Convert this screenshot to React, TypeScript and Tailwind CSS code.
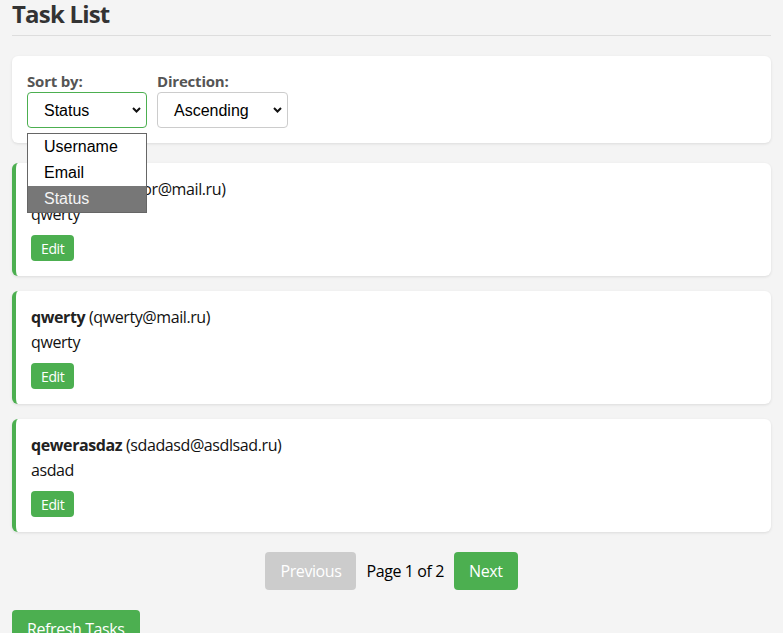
import { useState } from "react";

interface Task {
  id: number;
  username: string;
  email: string;
  text: string;
}

const tasks: Task[] = [
  { id: 1, username: "qwerty", email: "qwertyor@mail.ru", text: "qwerty" },
  { id: 2, username: "qwerty", email: "qwerty@mail.ru", text: "qwerty" },
  { id: 3, username: "qewerasdaz", email: "sdadasd@asdlsad.ru", text: "asdad" },
];

const sortOptions = ["Username", "Email", "Status"];

function Chevron() {
  return (
    <svg
      width="9"
      height="6"
      viewBox="0 0 9 6"
      className="pointer-events-none absolute right-[6px] top-1/2 -translate-y-1/2"
    >
      <path d="M1 1l3.5 3.5L8 1" fill="none" stroke="#111" strokeWidth="2" />
    </svg>
  );
}

export default function App() {
  const [sortBy] = useState("Status");

  return (
    <div className="min-h-screen bg-[#f4f4f4] px-[12px] font-['Open_Sans',sans-serif] tracking-[-0.4px] text-[#111]">
      <h1 className="h-[36px] border-b border-[#dddddd] pb-[7px] text-[24px] font-bold leading-[28px] tracking-[-0.8px] text-[#333]">
        Task List
      </h1>

      <div className="relative mt-[20px] rounded-[6px] bg-white p-[15px] shadow-[0_1px_3px_rgba(0,0,0,0.1)]">
        <div className="flex gap-[10px]">
          <div>
            <label className="block text-[15px] font-bold leading-[21px] tracking-[-0.2px] text-[#555]">
              Sort by:
            </label>
            <div className="relative">
              <div className="flex h-[36px] w-[120px] items-center rounded-[4px] border border-[#4caf50] bg-white pl-[16px] pt-[2px] font-['Liberation_Sans',sans-serif] text-[16px] tracking-normal text-black">
                {sortBy}
              </div>
              <Chevron />
              <ul className="absolute left-0 top-[41px] z-10 w-[120px] border border-[#666] bg-white font-['Liberation_Sans',sans-serif] text-[16px] tracking-normal text-black">
                {sortOptions.map((o) => (
                  <li
                    key={o}
                    className={`h-[26px] pl-[16px] leading-[26px] ${
                      o === sortBy ? "bg-[#777777] text-[#f4f4f4]" : ""
                    }`}
                  >
                    {o}
                  </li>
                ))}
              </ul>
            </div>
          </div>
          <div>
            <label className="block text-[15px] font-bold leading-[21px] tracking-[-0.2px] text-[#555]">
              Direction:
            </label>
            <div className="relative">
              <div className="flex h-[36px] w-[131px] items-center rounded-[4px] border border-[#cccccc] bg-white pl-[16px] pt-[2px] font-['Liberation_Sans',sans-serif] text-[16px] tracking-normal text-black">
                Ascending
              </div>
              <Chevron />
            </div>
          </div>
        </div>
      </div>

      <div className="mt-[20px] flex flex-col gap-[15px]">
        {tasks.map((t) => (
          <div
            key={t.id}
            className="rounded-[6px] border-l-4 border-[#4caf50] bg-white p-[15px] shadow-[0_1px_3px_rgba(0,0,0,0.1)]"
          >
            <p className="pt-[1px] text-[16px] leading-[21px]">
              <strong className="font-bold text-[#222]">{t.username}</strong> ({t.email})
            </p>
            <p className="mt-[4px] text-[16px] leading-[21px]">{t.text}</p>
            <button className="mt-[10px] h-[26px] rounded-[4px] bg-[#4caf50] px-[10px] text-[14px] text-white">
              Edit
            </button>
          </div>
        ))}
      </div>

      <div className="mt-[20px] flex items-center justify-center gap-[10px]">
        <button
          disabled
          className="h-[38px] rounded-[4px] bg-[#cccccc] px-[15px] text-[16px] text-white"
        >
          Previous
        </button>
        <span className="text-[16px] text-black">Page 1 of 2</span>
        <button className="h-[38px] rounded-[4px] bg-[#4caf50] px-[15px] text-[16px] text-white">
          Next
        </button>
      </div>

      <button className="mt-[20px] h-[38px] rounded-[4px] bg-[#4caf50] px-[15px] text-[16px] text-white">
        Refresh Tasks
      </button>
    </div>
  );
}
